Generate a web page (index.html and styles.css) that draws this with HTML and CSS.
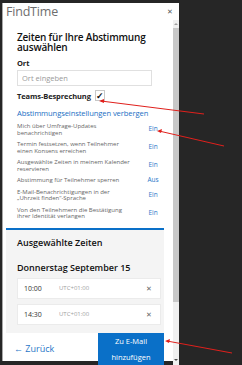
FILE: index.html
```html
<!DOCTYPE html>
<html lang="de">
<head>
    <meta charset="UTF-8">
    <meta name="viewport" content="width=device-width">
    <title>FindTime</title>
    <link rel="stylesheet" href="styles.css">
</head>
<body>

<div class=panel>
  <div class=head>
    <span class=app>FindTime</span>
    <span class=close>&#x2715;</span>
  </div>

  <div class=main>
    <div class=scroll>
      <div class=form>
        <h1>Zeiten für Ihre Abstimmung auswählen</h1>
        <div class=label>Ort</div>
        <input class=place placeholder="Ort eingeben">
        <div class="label teams">Teams-Besprechung <span class=check>&#x2713;</span></div>
        <a class=link>Abstimmungseinstellungen verbergen</a>

        <ul class=settings>
          <li><span>Mich über Umfrage-Updates<br>benachrichtigen</span><b>Ein</b></li>
          <li><span>Termin festsetzen, wenn Teilnehmer<br>einen Konsens erreichen</span><b>Ein</b></li>
          <li><span>Ausgewählte Zeiten in meinem Kalender<br>reservieren</span><b>Ein</b></li>
          <li><span>Abstimmung für Teilnehmer sperren</span><b>Aus</b></li>
          <li><span>E-Mail-Benachrichtigungen in der<br>„Uhrzeit finden“-Sprache</span><b>Ein</b></li>
          <li><span>Von den Teilnehmern die Bestätigung<br>ihrer Identität verlangen</span><b>Ein</b></li>
        </ul>
      </div>

      <div class=selected>
        <h2>Ausgewählte Zeiten</h2>
        <h3>Donnerstag September 15</h3>
        <div class=slot><span class=time>10:00</span><span class=tz>UTC+01:00</span><span class=remove>&#x2715;</span></div>
        <div class=slot><span class=time>14:30</span><span class=tz>UTC+01:00</span><span class=remove>&#x2715;</span></div>
      </div>

      <div class=footer>
        <a class=back>&#x2190; Zurück</a>
        <button class=add>Zu E-Mail<br>hinzufügen</button>
      </div>
    </div>

    <div class=bar>
      <span class=up></span>
      <span class=thumb></span>
      <span class=down></span>
    </div>
  </div>
</div>

<!-- annotation arrows drawn over the screenshot -->
<svg class=marks width="242" height="365" viewBox="0 0 242 365">
  <g stroke="#e0201c" stroke-width="1" fill="none">
    <line x1="101" y1="101" x2="204" y2="114"/>
    <line x1="159" y1="131" x2="224" y2="146"/>
    <line x1="167" y1="341" x2="232" y2="353"/>
  </g>
  <g fill="#e0201c">
    <polygon points="99,101 104,99 104,103"/>
    <polygon points="157,131 162,129 161,133"/>
    <polygon points="165,341 170,339 169,343"/>
  </g>
</svg>

</body>
</html>
```

FILE: styles.css
```css
body {
    margin: 0;
    background: #262626;
    font-family: "Segoe UI", "Open Sans", sans-serif;
    position: relative;
    width: 242px;
    height: 365px;
    overflow: hidden;
}
.panel {
    margin-top: 3px;
    width: 176px;
    height: 358px;
    background: white;
    border-left: 1px solid #a8a8a8;
    margin-left: 2px;
    display: flex;
    flex-direction: column;
}
.head {
    height: 22px;
    display: flex;
    align-items: center;
    justify-content: space-between;
    padding: 0 6px 0 3px;
}
.app {
    font-size: 12.5px;
    color: #6e6e6e;
    letter-spacing: -0.2px;
}
.close {
    font-size: 7px;
    color: #555;
}
.main {
    flex: 1;
    display: flex;
}
.scroll {
    flex: 1;
    padding: 0 9px 0 3px;
    display: flex;
    flex-direction: column;
}
.form {
    padding: 12px 0 0 11px;
}
h1 {
    font-size: 10px;
    line-height: 10px;
    font-weight: 600;
    margin: 0 0 6px;
    color: #111;
    letter-spacing: -0.2px;
}
.label {
    font-size: 7.5px;
    line-height: 10px;
    font-weight: 700;
    color: #222;
    letter-spacing: -0.1px;
}
.place {
    display: block;
    box-sizing: border-box;
    width: 135px;
    height: 16px;
    margin: 2px 0 0;
    border: 1px solid #e0e0e0;
    padding: 0 4px;
    font: 7.5px "Segoe UI", "Open Sans", sans-serif;
}
.place::placeholder {
    color: #9a9a9a;
}
.teams {
    margin-top: 4px;
    display: flex;
    align-items: center;
    gap: 4px;
}
.check {
    box-sizing: border-box;
    width: 10px;
    height: 11px;
    border: 1px solid #c8c8c8;
    font-size: 9px;
    line-height: 9px;
    text-align: center;
    color: #111;
}
.link {
    display: block;
    margin-top: 7px;
    font-size: 7.6px;
    line-height: 10px;
    color: #1a6fc4;
    letter-spacing: -0.1px;
}
.settings {
    list-style: none;
    margin: 5px 0 8px;
    padding: 0;
}
.settings li {
    display: flex;
    justify-content: space-between;
    align-items: center;
    margin-bottom: 5px;
    font-size: 6px;
    line-height: 6.5px;
    color: #666;
}
.settings b {
    font-weight: normal;
    color: #2a78c8;
    width: 20px;
    text-align: center;
    margin-right: 1px;
    font-size: 6.5px;
}
.selected {
    background: #f4f4f4;
    border-top: 2px solid #0a70c8;
    padding: 7px 3px 3px 11px;
}
h2 {
    font-size: 9px;
    line-height: 12px;
    font-weight: 600;
    margin: 0;
    color: #111;
}
h3 {
    font-size: 9px;
    line-height: 12px;
    font-weight: 600;
    margin: 13px 0 4px;
    color: #111;
}
.slot {
    box-sizing: border-box;
    height: 21px;
    background: white;
    border: 1px solid #ebebeb;
    display: flex;
    align-items: center;
    padding: 0 8px 0 6px;
    margin-bottom: 5px;
}
.time {
    font-size: 7px;
    color: #333;
    width: 35px;
}
.tz {
    font-size: 6px;
    color: #a0a0a0;
    flex: 1;
}
.remove {
    font-size: 7px;
    color: #666;
}
.footer {
    flex: 1;
    display: flex;
    justify-content: space-between;
    align-items: stretch;
    padding-left: 8px;
}
.back {
    align-self: center;
    font-size: 9px;
    color: #2a78c8;
}
.add {
    width: 66px;
    border: 0;
    margin: 0;
    padding: 0;
    background: #0a70c8;
    color: white;
    font: 7.5px/16px "Segoe UI", "Open Sans", sans-serif;
}
.bar {
    width: 6px;
    background: #f0f0f0;
    display: flex;
    flex-direction: column;
    align-items: center;
}
.up, .down {
    width: 0;
    height: 0;
    border-left: 2px solid transparent;
    border-right: 2px solid transparent;
    margin: 3px 0;
}
.up {
    border-bottom: 2px solid #a0a0a0;
}
.down {
    border-top: 2px solid #505050;
    margin-top: auto;
    margin-bottom: 4px;
}
.thumb {
    width: 6px;
    height: 274px;
    background: #c8c8c8;
}
.marks {
    position: absolute;
    left: 0;
    top: 0;
}
```
